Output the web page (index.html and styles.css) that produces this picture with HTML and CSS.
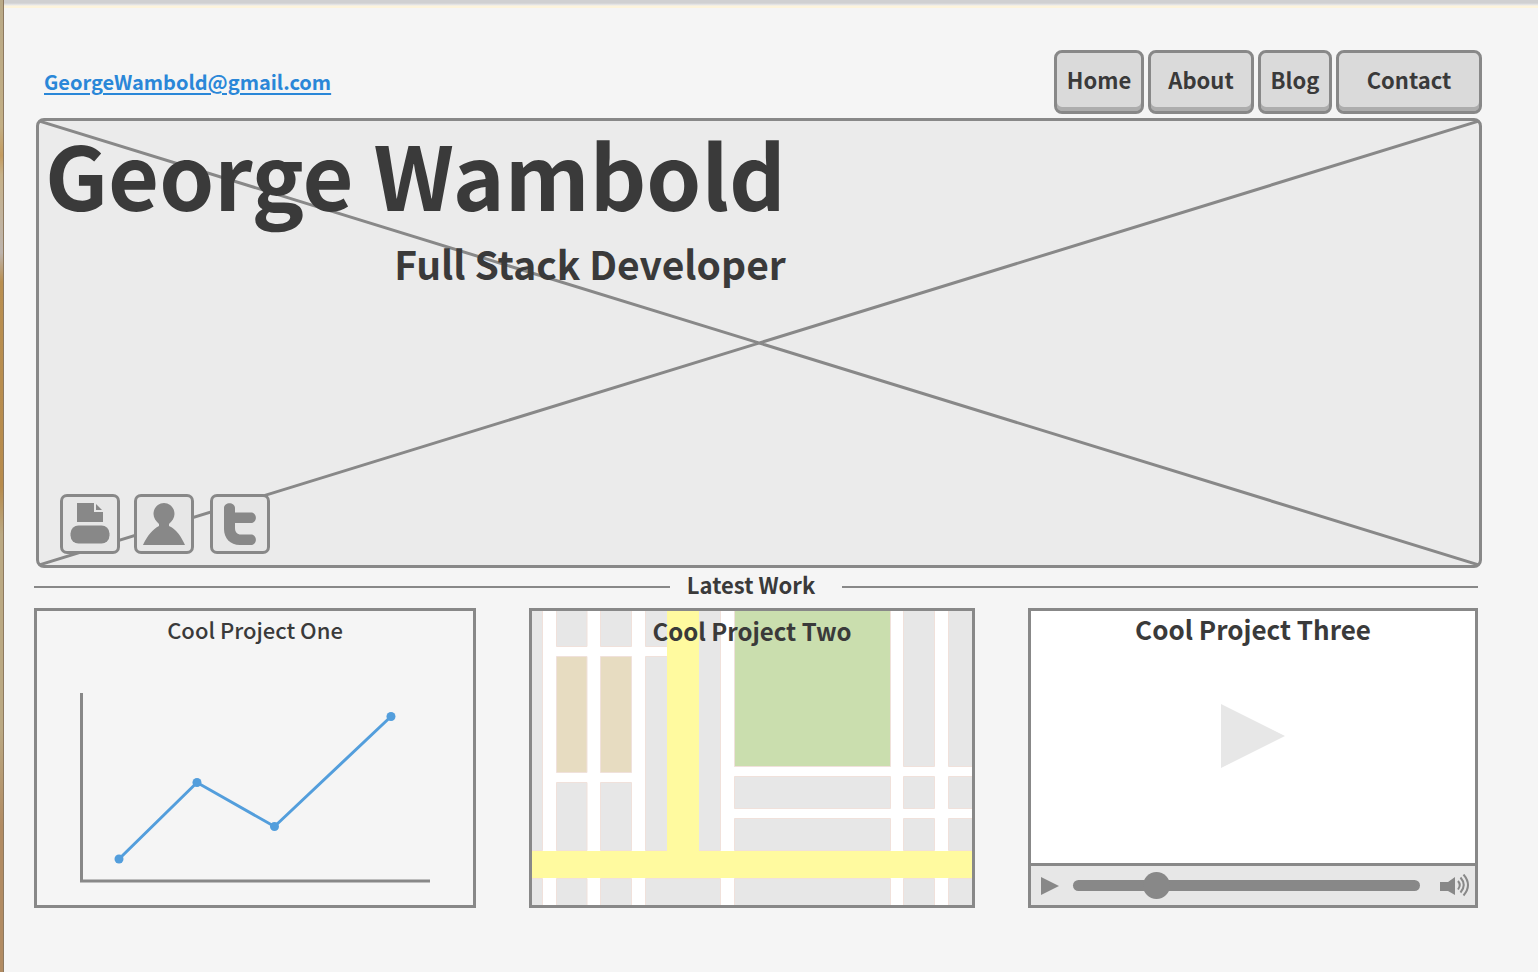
FILE: index.html
```html
<!DOCTYPE html>
<html lang="en">
<head>
<meta charset="utf-8">
<meta name="viewport" content="width=device-width, initial-scale=1">
<title>George Wambold</title>
<link rel="stylesheet" href="styles.css">
</head>
<body>
<div class="backdrop"></div>
<div class="page">
  <header class="header">
    <a class="email" href="mailto:GeorgeWambold@gmail.com">GeorgeWambold@gmail.com</a>
    <nav class="nav" aria-label="Main">
      <a class="tab tab-home" href="#home">Home</a>
      <a class="tab tab-about" href="#about">About</a>
      <a class="tab tab-blog" href="#blog">Blog</a>
      <a class="tab tab-contact" href="#contact">Contact</a>
    </nav>
  </header>

  <main>
    <section class="hero">
      <svg class="hero-cross" viewBox="0 0 100 100" preserveAspectRatio="none" aria-hidden="true">
        <path d="M0 0 100 100M100 0 0 100"/>
      </svg>
      <div class="intro">
        <h1 class="name">George Wambold</h1>
        <p class="role">Full Stack Developer</p>
      </div>
      <div class="social">
        <a class="social-link" href="#print" aria-label="Print">
          <svg viewBox="0 0 54 54" aria-hidden="true">
            <path d="M14 6H31V15H40V25H14Z"/><path d="M33 7 39 13H33Z"/>
            <rect x="7.500" y="28.500" width="39" height="18" rx="8"/>
          </svg>
        </a>
        <a class="social-link" href="#profile" aria-label="Profile">
          <svg viewBox="0 0 54 54" aria-hidden="true">
            <path d="M27 6C33 6 37.500 11 37.500 17C37.500 21 35 24 32 27V29C39 32 44 39 48 48H6C10 39 16 32 22 29V27C19 24 16.500 21 16.500 17C16.500 11 21 6 27 6Z"/>
          </svg>
        </a>
        <a class="social-link twitter" href="#twitter" aria-label="Twitter">
          <svg viewBox="0 0 54 54" aria-hidden="true">
            <path d="M11 11C11 4.500 22 4.500 22 11V15.500H38C44.500 15.500 44.500 26 38 26H22V31C22 35 24 37.500 28 37.500H38C44.500 37.500 44.500 48 38 48H27C17 48 11 41 11 32Z"/>
          </svg>
        </a>
      </div>
    </section>

    <section class="work">
      <h2 class="work-title"><span>Latest Work</span></h2>
      <div class="cards">
        <article class="card">
          <h3 class="card-title light">Cool Project One</h3>
          <svg class="art" viewBox="0 0 436 294" role="img" aria-label="Line chart">
            <path class="axis" d="M44.500 82V270H393"/>
            <path class="series" d="M82 248 160 171.500 237.500 215.500 354 105.500"/>
            <g class="points">
              <circle cx="82" cy="248" r="4.500"/><circle cx="160" cy="171.500" r="4.500"/>
              <circle cx="237.500" cy="215.500" r="4.500"/><circle cx="354" cy="105.500" r="4.500"/>
            </g>
          </svg>
        </article>

        <article class="card">
          <h3 class="card-title medium">Cool Project Two</h3>
          <svg class="art" viewBox="0 0 440 294" preserveAspectRatio="none" role="img" aria-label="Street map">
            <rect width="440" height="294" fill="#fff"/>
            <g class="blocks">
              <path d="M-2-2H10.500V239.500H-2ZM-2 267.500H10.500V296H-2Z"/>
              <path d="M24.500-2H55V35.500H24.500ZM24.500 171.500H55V239.500H24.500ZM24.500 267.500H55V296H24.500Z"/>
              <path d="M68.500-2H99.500V35.500H68.500ZM68.500 171.500H99.500V239.500H68.500ZM68.500 267.500H99.500V296H68.500Z"/>
              <path d="M113.500-2H136V35.500H113.500ZM113.500 45.500H136V239.500H113.500ZM166-2H188.500V239.500H166ZM113.500 267.500H188.500V296H113.500Z"/>
              <path d="M202.500 165.500H358.500V197.500H202.500ZM202.500 207.500H358.500V239.500H202.500ZM202.500 267.500H358.500V296H202.500Z"/>
              <path d="M371.500-2H402.500V155.500H371.500ZM371.500 165.500H402.500V197.500H371.500ZM371.500 207.500H402.500V239.500H371.500ZM371.500 267.500H402.500V296H371.500Z"/>
              <path d="M416.500-2H442V155.500H416.500ZM416.500 165.500H442V197.500H416.500ZM416.500 207.500H442V239.500H416.500ZM416.500 267.500H442V296H416.500Z"/>
              <path class="building" d="M24.500 45.500H55V161.500H24.500ZM68.500 45.500H99.500V161.500H68.500Z"/>
              <path class="park" d="M202.500-2H358.500V155.500H202.500Z"/>
            </g>
            <path fill="#fffa9f" d="M135 0H167V240H440V267H0V240H135Z"/>
          </svg>
        </article>

        <article class="card video">
          <h3 class="card-title">Cool Project Three</h3>
          <div class="screen">
            <button class="big-play" type="button" aria-label="Play video">
              <svg viewBox="0 0 64 64" aria-hidden="true"><path d="M0 0 64 32 0 64Z"/></svg>
            </button>
          </div>
          <div class="controls">
            <button class="icon-button play" type="button" aria-label="Play">
              <svg viewBox="0 0 18 18" aria-hidden="true"><path d="M0 0 18 9 0 18Z"/></svg>
            </button>
            <input class="seek" type="range" min="0" max="100" value="22" aria-label="Seek">
            <button class="icon-button volume" type="button" aria-label="Volume">
              <svg viewBox="0 0 30 24" aria-hidden="true">
                <path d="M0 8H8L15 3V21L8 17H0Z"/>
                <path class="waves" d="M18 7Q21.500 11 18 15.500M20.500 3.500Q27 11 20.500 18.500M23.500 .5Q32.500 11 23.500 21.500"/>
              </svg>
            </button>
          </div>
        </article>
      </div>
    </section>
  </main>
</div>
</body>
</html>
```
FILE: styles.css
```css
* { box-sizing: border-box; }

body {
  margin: 0;
  min-height: 100vh;
  display: flex;
  background: #f5f5f5;
  color: #3a3a3a;
  font-family: "Noto Sans CJK SC", "Noto Sans", sans-serif;
}

h1, h2, h3, p { margin: 0; }

.backdrop {
  flex: 0 0 4px;
  border-right: 1px solid #8d7960;
  background: linear-gradient(#b9a987 0, #c3af85 13%, #c49c60 16%, #c7b28a 18%, #bdb4ad 26%, #b98f50 29%, #b78b4c 50%, #bba983 55%, #bba983 75%, #b18b62 85%, #b18b62 100%);
}

.page {
  flex: 1;
  min-width: 0;
  padding: 50px 56px 64px 30px;
  background: linear-gradient(#d0d0d1 3px, #e9e9e9 5px, #fdf4dc 6px, #fdf4dc 8px, transparent 8px) no-repeat;
}

.header {
  display: flex;
  justify-content: space-between;
  align-items: center;
  padding-left: 10px;
  margin-bottom: 4px;
}

.email {
  color: #2a87d8;
  font-size: 20px;
  font-weight: 700;
  line-height: 32px;
  text-decoration-thickness: 2px;
  text-underline-offset: 3px;
}

.nav { display: flex; gap: 4px; }

.tab {
  min-width: 74px;
  height: 64px;
  padding: 10px 8px;
  border: 3px solid #888;
  border-radius: 8px;
  background: #dadada;
  box-shadow: inset 0 -4px #adadad;
  color: inherit;
  font-size: 22px;
  font-weight: 700;
  line-height: 32px;
  text-align: center;
  text-decoration: none;
}
.tab-home { min-width: 90px; }
.tab-about { min-width: 106px; }
.tab-contact { min-width: 146px; }

.hero {
  position: relative;
  display: flex;
  flex-direction: column;
  justify-content: space-between;
  min-height: 450px;
  margin-left: 2px;
  padding: 4px 6px 11px;
  border: 3px solid #888;
  border-radius: 8px;
  background: #ebebeb;
}

.hero-cross {
  position: absolute;
  inset: 0;
  width: 100%;
  height: 100%;
  fill: none;
  stroke: #888;
  stroke-width: 3;
}
.hero-cross path { vector-effect: non-scaling-stroke; }

.intro {
  position: relative;
  align-self: flex-start;
  text-align: right;
}
.name { font-size: 88px; line-height: 96px; font-weight: 700; }
.role { margin-top: 16px; font-size: 39px; line-height: 52px; font-weight: 700; }

.social {
  position: relative;
  display: flex;
  gap: 14px;
  padding-left: 15px;
}
.social-link {
  width: 60px;
  height: 60px;
  border: 3px solid #888;
  border-radius: 7px;
  background: #e7e7e7;
}
.social-link svg { display: block; fill: #888; }
.twitter { margin-left: 2px; }

.work { margin-right: 4px; }

.work-title {
  display: flex;
  align-items: center;
  font-size: 22px;
  line-height: 32px;
  font-weight: 700;
  margin-bottom: 2px;
}
.work-title span { padding-bottom: 6px; }
.work-title::before, .work-title::after {
  content: "";
  flex: 1;
  height: 2px;
  background: #888;
}
.work-title::before { margin-right: 17px; }
.work-title::after { margin-left: 27px; }

.cards {
  display: grid;
  grid-template-columns: 442fr 446fr 450fr;
  gap: 53px;
}

.card {
  position: relative;
  min-height: 300px;
  border: 3px solid #888;
}

.card-title {
  position: absolute;
  top: 0;
  left: 0;
  right: 0;
  font-size: 26px;
  line-height: 36px;
  font-weight: 700;
  text-align: center;
}
.light { font-size: 22px; font-weight: 500; }
.medium { font-size: 24px; line-height: 40px; }

.art { display: block; width: 100%; height: 100%; }
.axis { fill: none; stroke: #888; stroke-width: 3; }
.series { fill: none; stroke: #539edc; stroke-width: 3; }
.points { fill: #539edc; }

.blocks { fill: #e7e7e7; stroke: #f0e1db; stroke-width: 1; }
.building { fill: #e7dcc1; }
.park { fill: #cadeae; }

.video { display: flex; flex-direction: column; background: #fff; }
.screen {
  flex: 1;
  display: flex;
  align-items: center;
  justify-content: center;
  padding-bottom: 2px;
}

button { padding: 0; border: 0; background: none; }
button svg { display: block; width: 100%; fill: #888; }

.big-play { width: 64px; height: 64px; }
.big-play svg { fill: #e7e7e7; }

.controls {
  display: flex;
  align-items: center;
  height: 42px;
  padding: 0 5px 0 10px;
  border-top: 3px solid #888;
  background: #e7e7e7;
}
.icon-button { flex: none; }
.play { width: 18px; }
.volume { width: 30px; }
.volume .waves { fill: none; stroke: #888; stroke-width: 2; }

.seek {
  flex: 1;
  min-width: 0;
  height: 27px;
  margin: 0 20px 0 14px;
  background: transparent;
  appearance: none;
}
.seek::-webkit-slider-runnable-track {
  height: 11px;
  border-radius: 6px;
  background: #888;
}
.seek::-webkit-slider-thumb {
  appearance: none;
  width: 27px;
  height: 27px;
  margin-top: -8px;
  border-radius: 50%;
  background: #888;
}
```
